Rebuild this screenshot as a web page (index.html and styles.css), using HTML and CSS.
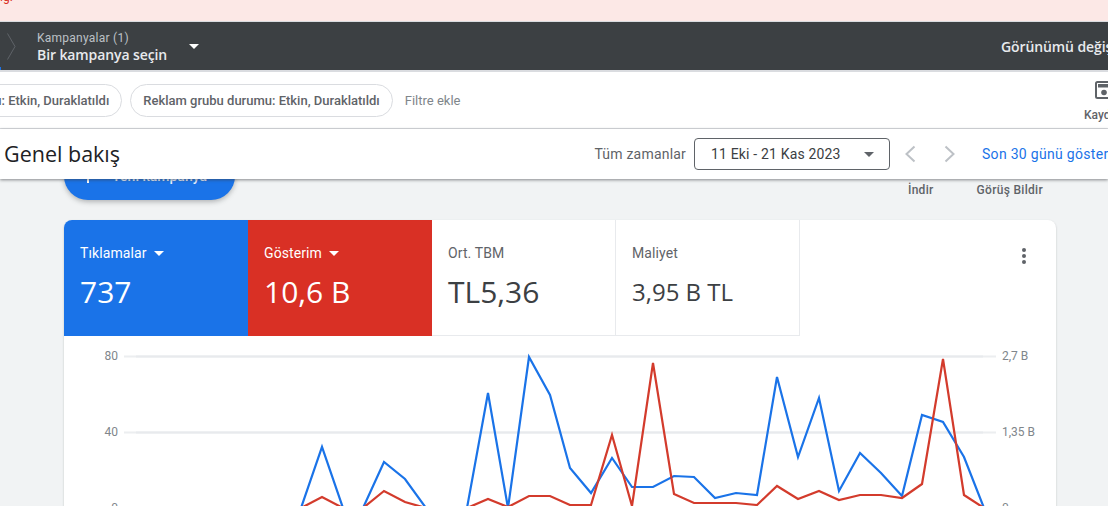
FILE: index.html
```html
<!DOCTYPE html>
<html lang="tr">
<head>
<meta charset="utf-8">
<title>Genel bakış</title>
<link rel="stylesheet" href="styles.css">
</head>
<body>
<header class="head">
  <div class="banner"><span class="banner-text">ığ.</span></div>
  <div class="crumbs">
    <svg class="chev" width="9" height="27" viewBox="0 0 9 27"><path d="M.5.5L8 13.500.5 26.500" fill="none" stroke="#5f6368"/></svg>
    <div class="crumb">
      <div class="crumb-label">Kampanyalar (1)</div>
      <div class="crumb-value">Bir kampanya seçin</div>
    </div>
    <span class="caret caret-crumb"></span>
    <div class="spacer"></div>
    <div class="view-btn">Görünümü değiştir</div>
  </div>
  <div class="filters">
    <div class="chip chip-cut">Kampanya durumu: Etkin, Duraklatıldı</div>
    <div class="chip">Reklam grubu durumu: Etkin, Duraklatıldı</div>
    <div class="add-filter">Filtre ekle</div>
    <div class="spacer"></div>
    <div class="save">
      <svg width="18" height="18" viewBox="0 0 18 18"><path d="M2.500 1h13A1.500 1.500 0 0 1 17 2.500v13a1.500 1.500 0 0 1-1.500 1.500h-13A1.500 1.500 0 0 1 1 15.500v-13A1.500 1.500 0 0 1 2.500 1z" fill="none" stroke="#5f6368" stroke-width="2"/><rect x="3" y="3" width="12" height="3.500" fill="#5f6368"/><circle cx="9" cy="11.500" r="2.800" fill="#5f6368"/></svg>
      <span>Kaydet</span>
    </div>
  </div>
  <div class="titlebar">
    <h1 class="title">Genel bakış</h1>
    <div class="spacer"></div>
    <span class="range-label">Tüm zamanlar</span>
    <div class="range"><span>11 Eki - 21 Kas 2023</span><span class="caret caret-range"></span></div>
    <svg class="arrow arrow-prev" width="14" height="18" viewBox="0 0 14 18"><path d="M11.500 1.500L3.500 9l8 7.500" fill="none" stroke="#bdc1c6" stroke-width="2"/></svg>
    <svg class="arrow arrow-next" width="14" height="18" viewBox="0 0 14 18"><path d="M2.500 1.500l8 7.500-8 7.500" fill="none" stroke="#bdc1c6" stroke-width="2"/></svg>
    <div class="last30">Son 30 günü göster</div>
  </div>
</header>
<main class="content">
  <div class="toolbar">
    <div class="fab"><span class="fab-plus"></span><span>Yeni kampanya</span></div>
    <div class="spacer"></div>
    <div class="tool tool-dl">İndir</div>
    <div class="tool tool-fb">Görüş Bildir</div>
  </div>
  <section class="card">
    <div class="tabs">
      <div class="tab tab-blue">
        <div class="tab-label">Tıklamalar <span class="caret caret-tab"></span></div>
        <div class="tab-value">737</div>
      </div>
      <div class="tab tab-red">
        <div class="tab-label">Gösterim <span class="caret caret-tab"></span></div>
        <div class="tab-value">10,6 B</div>
      </div>
      <div class="tab tab-plain">
        <div class="tab-label">Ort. TBM</div>
        <div class="tab-value">TL5,36</div>
      </div>
      <div class="tab tab-plain tab-small">
        <div class="tab-label">Maliyet</div>
        <div class="tab-value">3,95 B TL</div>
      </div>
      <div class="tab-rest"><div class="more"><i></i><i></i><i></i></div></div>
    </div>
    <div class="chart">
      <svg width="992" height="180" viewBox="64 336 992 180">
        <g class="grid-soft">
          <line x1="124" x2="996" y1="356.500" y2="356.500"/>
          <line x1="124" x2="996" y1="432.500" y2="432.500"/>
          <line x1="124" x2="996" y1="508" y2="508"/>
        </g>
        <g class="grid">
          <line x1="136" x2="983" y1="356.500" y2="356.500"/>
          <line x1="136" x2="983" y1="432.500" y2="432.500"/>
          <line x1="136" x2="983" y1="508" y2="508"/>
        </g>
        <g class="axis">
          <text x="118" y="360" text-anchor="end">80</text>
          <text x="118" y="436" text-anchor="end">40</text>
          <text x="118" y="512" text-anchor="end">0</text>
          <text x="1002" y="360">2,7 B</text>
          <text x="1002" y="436">1,35 B</text>
          <text x="1002" y="512">0</text>
        </g>
        <polyline class="line line-blue" points="301,508 322,447 343,508 363,508 384,462 405,479 426,508 446,508 467,508 488,393 508,508 529,357 550,395 570,468 591,493 612,458 632,487 653,487 674,476 694,477 715,498 736,493 757,495 777,377 798,457 819,398 839,491 860,453 881,473 902,496 922,415 943,422 964,457 984,508"/>
        <polyline class="line line-red" points="301,508 322,497 343,508 363,508 384,491 405,502 426,508 446,508 467,508 488,499 508,507 529,496 550,496 570,505 591,505 612,435 632,506 653,363 674,494 694,503 715,503 736,503 757,505 777,486 798,499 819,491 839,500 860,495 881,495 902,498 922,484 943,359 964,495 984,508"/>
      </svg>
    </div>
  </section>
</main>
</body>
</html>
```

FILE: styles.css
```css
* { box-sizing: border-box; }
html, body { margin: 0; height: 100%; }
body {
  width: 1108px;
  height: 506px;
  overflow: hidden;
  background: #f1f3f4;
  font-family: Roboto, "Liberation Sans", sans-serif;
  color: #3c4043;
}
.spacer { flex: 1; }
.head { position: relative; z-index: 2; }
.banner {
  height: 22px;
  background: #fce8e6;
  border-bottom: 1px solid #dadce0;
  overflow: hidden;
}
.banner-text {
  display: block;
  margin-top: -11px;
  font-size: 12px;
  line-height: 16px;
  color: #d93025;
}
.crumbs {
  position: relative;
  display: flex;
  align-items: center;
  height: 48px;
  padding-left: 7px;
  background: #3c4043;
  box-shadow: 0 2px 0 #dadce0;
  overflow: hidden;
}
.crumbs::before {
  content: "";
  position: absolute;
  left: 0;
  bottom: 0;
  width: 1px;
  height: 3px;
  background: #1a73e8;
}
.chev { flex: none; }
.crumb { margin-left: 21px; width: 152px; padding-top: 2px; }
.crumb-label { font-size: 12px; line-height: 16px; color: #bdc1c6; letter-spacing: .25px; }
.crumb-value {
  font-family: "Open Sans", sans-serif;
  font-size: 14px;
  line-height: 18px;
  font-weight: 600;
  letter-spacing: -.1px;
  color: #e8eaed;
}
.caret {
  display: inline-block;
  width: 0;
  height: 0;
  border-left: 5px solid transparent;
  border-right: 5px solid transparent;
  border-top: 5px solid #fff;
}
.view-btn {
  flex: none;
  width: 107px;
  font-family: "Open Sans", sans-serif;
  font-size: 14px;
  font-weight: 600;
  letter-spacing: -.1px;
  color: #e8eaed;
  white-space: nowrap;
  overflow: hidden;
}
.filters {
  display: flex;
  align-items: center;
  height: 57px;
  margin-top: 2px;
  background: #fff;
  border-bottom: 1px solid #dadce0;
  overflow: hidden;
}
.chip {
  flex: none;
  height: 33px;
  padding: 0 12px;
  border: 1px solid #dadce0;
  border-radius: 17px;
  font-size: 13px;
  font-weight: 500;
  line-height: 31px;
  color: #5f6368;
  white-space: nowrap;
}
.chip-cut { margin-left: -121px; margin-right: 8px; }
.add-filter { margin-left: 12px; font-size: 13px; color: #80868b; }
.save {
  flex: none;
  width: 24px;
  display: flex;
  flex-direction: column;
  align-items: flex-start;
  gap: 9px;
  font-size: 12px;
  font-weight: 500;
  line-height: 14px;
  color: #5f6368;
}
.save svg { margin-left: 11px; margin-top: 3px; }
.save span { white-space: nowrap; }
.titlebar {
  display: flex;
  align-items: center;
  height: 50px;
  background: #fff;
  box-shadow: 0 1px 3px rgba(60, 64, 67, .6);
  padding-left: 4px;
  overflow: hidden;
}
.title {
  margin: -2px 0 0;
  font-family: "Open Sans", sans-serif;
  font-size: 21.500px;
  font-weight: 400;
  color: #202124;
}
.range-label { font-size: 14px; color: #5f6368; letter-spacing: .2px; }
.range {
  display: flex;
  align-items: center;
  justify-content: space-between;
  width: 196px;
  height: 32px;
  margin-left: 8px;
  padding: 0 15px 0 16px;
  border: 1px solid #5f6368;
  border-radius: 4px;
  font-size: 14px;
  color: #3c4043;
  letter-spacing: .17px;
}
.caret-range { border-top-color: #5f6368; }
.arrow { flex: none; }
.arrow-prev { margin-left: 13px; }
.arrow-next { margin-left: 26px; }
.last30 {
  flex: none;
  width: 126px;
  margin-left: 25px;
  font-size: 14px;
  color: #1a73e8;
  letter-spacing: .3px;
  white-space: nowrap;
  overflow: hidden;
}
.content { padding: 0 52px 0 64px; }
.toolbar {
  display: flex;
  height: 48px;
  margin-top: -27px;
  margin-bottom: 20px;
}
.fab {
  display: flex;
  align-items: center;
  gap: 17px;
  width: 171px;
  height: 48px;
  padding-left: 17px;
  border-radius: 24px;
  background: #1a73e8;
  color: #e8f0fe;
  font-size: 14px;
  font-weight: 500;
  box-shadow: 0 2px 5px rgba(60, 64, 67, .35);
}
.fab-plus {
  width: 14px;
  height: 14px;
  background:
    linear-gradient(#fff, #fff) center / 2px 14px no-repeat,
    linear-gradient(#fff, #fff) center / 14px 2px no-repeat;
}
.tool {
  margin-top: 30px;
  font-size: 12px;
  line-height: 16px;
  font-weight: 500;
  letter-spacing: .3px;
  color: #5f6368;
}
.tool-dl { margin-right: 43px; }
.tool-fb { margin-right: 13px; }
.card {
  background: #fff;
  border-radius: 8px 8px 0 0;
  box-shadow: 0 1px 2px rgba(60, 64, 67, .3);
  overflow: hidden;
}
.tabs { display: flex; height: 116px; }
.tab { width: 184px; padding: 24px 16px 0; }
.tab-blue { background: #1a73e8; color: #fff; }
.tab-red { background: #d93025; color: #fff; }
.tab-plain { border-right: 1px solid #e8eaed; border-bottom: 1px solid #e8eaed; }
.tab-label { font-size: 14px; line-height: 18px; letter-spacing: .1px; display: flex; align-items: center; gap: 7px; }
.tab-plain .tab-label { color: #5f6368; }
.tab-value {
  margin-top: 10px;
  font-family: "Open Sans", Roboto, sans-serif;
  font-size: 30px;
  line-height: 40px;
}
.tab-small .tab-value { font-size: 24px; }
.tab-rest { flex: 1; display: flex; justify-content: flex-end; padding: 28px 30px 0 0; }
.more { display: flex; flex-direction: column; gap: 2px; }
.more i { display: block; width: 4px; height: 4px; border-radius: 50%; background: #5f6368; }
.chart svg { display: block; }
.grid-soft line { stroke: #eceef0; stroke-width: 2; }
.grid line { stroke: #e8eaed; stroke-width: 2; }
.axis text { font-size: 12px; fill: #80868b; }
.line { fill: none; stroke-width: 2.200; stroke-linejoin: miter; }
.line-blue { stroke: #1a73e8; }
.line-red { stroke: #d33b2c; }
```
